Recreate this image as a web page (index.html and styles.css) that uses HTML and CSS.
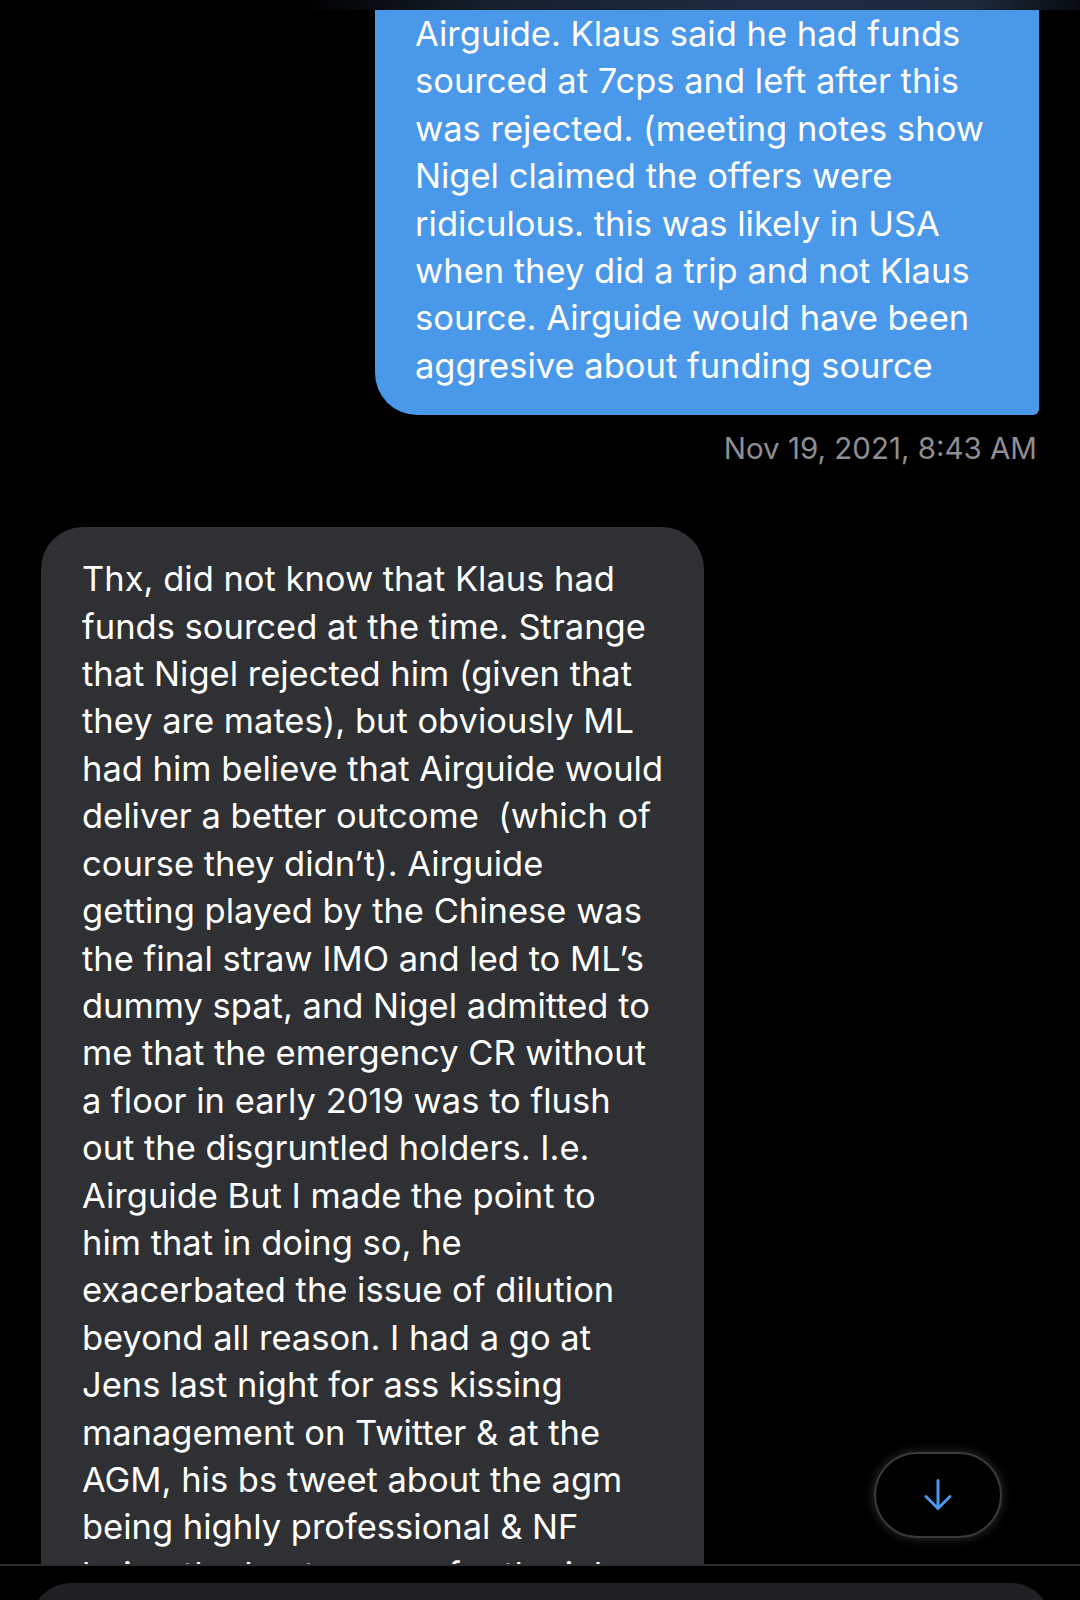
FILE: index.html
```html
<!DOCTYPE html>
<html lang="en">
<head>
  <meta charset="UTF-8">
  <meta name="viewport" content="width=device-width, initial-scale=1.0">
  <title>Messages</title>
  <link rel="stylesheet" href="styles.css">
</head>
<body>

  <div class="screen">
    <!-- Edge of the blurred header -->
    <div class="top-fade"></div>

    <!-- Conversation -->
    <div class="thread">
      <div class="bubble sent">
        Airguide. Klaus said he had funds<br>
        sourced at 7cps and left after this<br>
        was rejected. (meeting notes show<br>
        Nigel claimed the offers were<br>
        ridiculous. this was likely in USA<br>
        when they did a trip and not Klaus<br>
        source. Airguide would have been<br>
        aggresive about funding source
      </div>

      <div class="timestamp">Nov 19, 2021, 8:43 AM</div>

      <div class="bubble received">
        Thx, did not know that Klaus had<br>
        funds sourced at the time. Strange<br>
        that Nigel rejected him (given that<br>
        they are mates), but obviously ML<br>
        had him believe that Airguide would<br>
        deliver a better outcome&nbsp; (which of<br>
        course they didn’t). Airguide<br>
        getting played by the Chinese was<br>
        the final straw IMO and led to ML’s<br>
        dummy spat, and Nigel admitted to<br>
        me that the emergency CR without<br>
        a floor in early 2019 was to flush<br>
        out the disgruntled holders. I.e.<br>
        Airguide But I made the point to<br>
        him that in doing so, he<br>
        exacerbated the issue of dilution<br>
        beyond all reason. I had a go at<br>
        Jens last night for ass kissing<br>
        management on Twitter &amp; at the<br>
        AGM, his bs tweet about the agm<br>
        being highly professional &amp; NF<br>
        being the best person for the job
      </div>

      <!-- Jump to latest -->
      <button class="scroll-down" aria-label="Scroll to bottom">
        <svg width="28" height="32" viewBox="0 0 28 32">
          <path d="M14 1.5 V29.5 M2 17.5 L14 29.5 L26 17.5" fill="none" stroke="#4a98e9" stroke-width="3" stroke-linecap="round" stroke-linejoin="round"/>
        </svg>
      </button>
    </div>

    <!-- Compose bar -->
    <div class="composer">
      <div class="input"></div>
    </div>
  </div>

</body>
</html>
```

FILE: styles.css
```css
/* Page */
body {
  margin: 0;
  background: #000;
  font-family: Inter, "Noto Sans", sans-serif;
}

.screen {
  width: 1080px;
  height: 1600px;
  overflow: hidden;
  display: flex;
  flex-direction: column;
}

/* Bottom edge of the translucent header */
.top-fade {
  height: 10px;
  flex-shrink: 0;
  background: linear-gradient(to right, #000 0%, #000 28%, #15202d 45%, #1d2c40 70%, #1c2a3c 90%, #080c12 100%);
}

/* Message list */
.thread {
  position: relative;
  flex: 1;
  overflow: hidden;
  display: flex;
  flex-direction: column;
  padding: 0 41px;
}

.bubble {
  box-sizing: border-box;
  flex-shrink: 0;
  font-size: 34.5px;
  line-height: 47.4px;
  color: #fff;
  white-space: nowrap;
}

.sent {
  align-self: flex-end;
  width: 664px;
  padding: 0 40px 26px;
  background: #4a98e9;
  border-radius: 0 0 6px 42px;
}

.timestamp {
  align-self: flex-end;
  margin-top: 15px;
  margin-right: 2px;
  font-size: 29.5px;
  line-height: 36px;
  color: #8d8d92;
}

.received {
  align-self: flex-start;
  width: 663px;
  margin-top: 61px;
  padding: 28px 41px;
  background: #2e3033;
  border-radius: 42px;
}

/* Floating "jump to bottom" button */
.scroll-down {
  position: absolute;
  left: 874px;
  top: 1442px;
  width: 128px;
  height: 86px;
  display: flex;
  align-items: center;
  justify-content: center;
  padding: 0;
  background: #000;
  border: 2px solid #3a3a3c;
  border-radius: 43px;
  box-shadow: 0 0 9px 2px rgba(150, 150, 150, 0.22);
  cursor: pointer;
}

/* Compose bar */
.composer {
  height: 36px;
  flex-shrink: 0;
  box-sizing: border-box;
  border-top: 2px solid #2c2c2e;
  padding: 17px 29px 0 31px;
  background: #000;
}

.input {
  height: 40px;
  background: #1f2124;
  border-radius: 40px 40px 0 0;
}
```
